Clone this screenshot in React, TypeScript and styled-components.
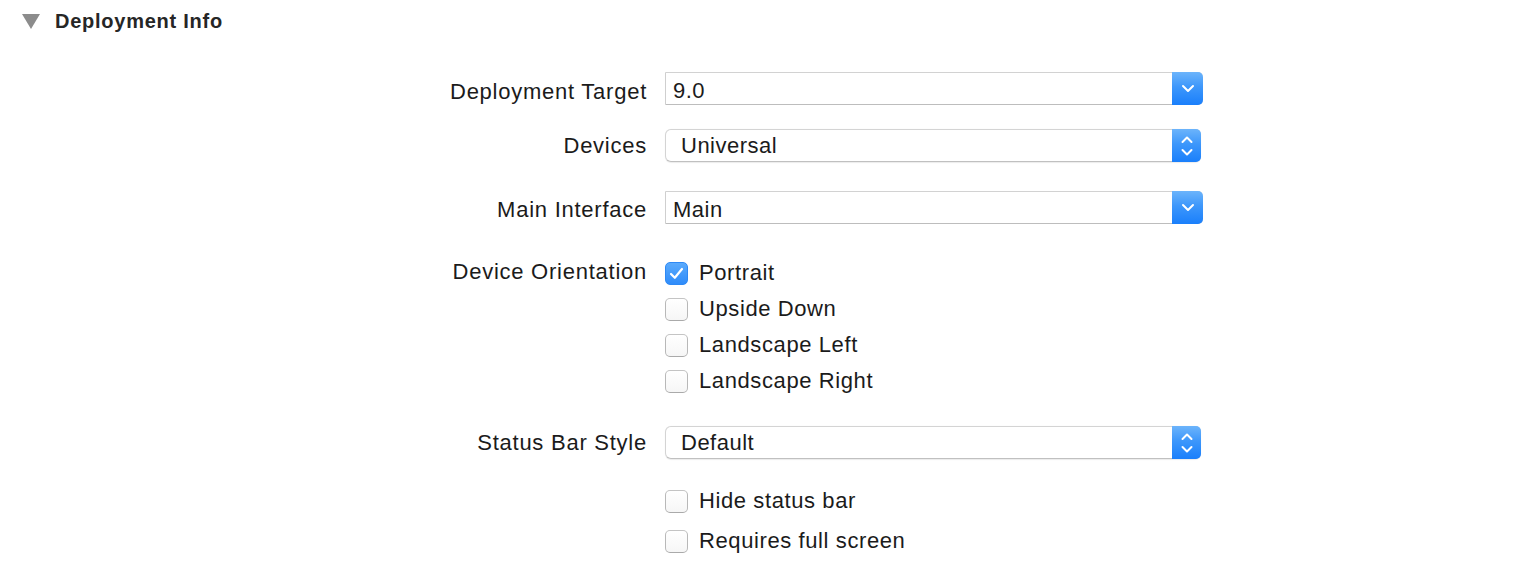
import React from 'react';
import styled, { createGlobalStyle, css } from 'styled-components';

const GlobalStyle = createGlobalStyle`
    html, body {
        margin: 0;
        padding: 0;
        background: #ffffff;
    }
    body {
        font-family: "Liberation Sans", Arial, sans-serif;
        color: #1d1d1d;
    }
`;

type SelectKind = 'combo' | 'popup';

interface RowProps {
    gap: number,
};

interface CheckOption {
    label: string,
    checked?: boolean,
};

const orientations: CheckOption[] = [
    { label: 'Portrait', checked: true },
    { label: 'Upside Down' },
    { label: 'Landscape Left' },
    { label: 'Landscape Right' },
];

const statusOptions: CheckOption[] = [
    { label: 'Hide status bar' },
    { label: 'Requires full screen' },
];

const ChevronDown = () => (
    <svg width="14" height="9" viewBox="0 0 14 9">
        <path d="M2 2 L7 7 L12 2" fill="none" stroke="#fff" strokeWidth="2" strokeLinecap="round" strokeLinejoin="round" />
    </svg>
);

const ChevronUpDown = () => (
    <svg width="14" height="24" viewBox="0 0 14 24">
        <path d="M2.5 8 L7 3.5 L11.5 8" fill="none" stroke="#fff" strokeWidth="2" strokeLinecap="round" strokeLinejoin="round" />
        <path d="M2.5 16 L7 20.5 L11.5 16" fill="none" stroke="#fff" strokeWidth="2" strokeLinecap="round" strokeLinejoin="round" />
    </svg>
);

const CheckMark = () => (
    <svg width="15" height="13" viewBox="0 0 15 13">
        <path d="M2 7 L5.8 10.8 L13 2" fill="none" stroke="#fff" strokeWidth="2.2" strokeLinecap="round" strokeLinejoin="round" />
    </svg>
);

const Select: React.FC<{ kind: SelectKind, value: string }> = ({ kind, value }) => (
    <SelectBox kind={kind}>
        <SelectValue kind={kind}>{value}</SelectValue>
        <SelectButton kind={kind}>
            {kind === 'combo' ? <ChevronDown /> : <ChevronUpDown />}
        </SelectButton>
    </SelectBox>
);

const CheckList: React.FC<{ options: CheckOption[], rowHeight: number }> = ({ options, rowHeight }) => (
    <Checks>
        {options.map((option) => (
            <CheckRow key={option.label} rowHeight={rowHeight}>
                <CheckBox checked={!!option.checked}>
                    {option.checked && <CheckMark />}
                </CheckBox>
                <CheckLabel>{option.label}</CheckLabel>
            </CheckRow>
        ))}
    </Checks>
);

export default function App() {
    return (
        <Page>
            <GlobalStyle />
            <SectionHeader>
                <Disclosure />
                <SectionTitle>{'Deployment Info'}</SectionTitle>
            </SectionHeader>
            <Form>
                <Row gap={30}>
                    <Label shift={3}>{'Deployment Target'}</Label>
                    <Select kind={'combo'} value={'9.0'} />
                </Row>
                <Row gap={24}>
                    <Label>{'Devices'}</Label>
                    <Select kind={'popup'} value={'Universal'} />
                </Row>
                <Row gap={29}>
                    <Label shift={2}>{'Main Interface'}</Label>
                    <Select kind={'combo'} value={'Main'} />
                </Row>
                <Row gap={31}>
                    <Label>{'Device Orientation'}</Label>
                    <CheckList options={orientations} rowHeight={36} />
                </Row>
                <Row gap={27}>
                    <Label>{'Status Bar Style'}</Label>
                    <Select kind={'popup'} value={'Default'} />
                </Row>
                <Row gap={22}>
                    <Label />
                    <CheckList options={statusOptions} rowHeight={40} />
                </Row>
            </Form>
        </Page>
    );
}

const Page = styled.div`
    width: 1530px;
    height: 570px;
    overflow: hidden;
    background: #ffffff;
`;
const SectionHeader = styled.div`
    height: 42px;
    display: flex;
    align-items: center;
    padding-left: 22px;
    gap: 15px;
`;
const Disclosure = styled.div`
    width: 0;
    height: 0;
    border-left: 9px solid transparent;
    border-right: 9px solid transparent;
    border-top: 15px solid #8c8c8c;
`;
const SectionTitle = styled.div`
    font-size: 20px;
    font-weight: 700;
    letter-spacing: 0.75px;
    color: #262626;
`;
const Form = styled.div`
    display: flex;
    flex-direction: column;
`;
const Row = styled.div<RowProps>`
    display: flex;
    align-items: flex-start;
    gap: 18px;
    margin-top: ${(p) => p.gap}px;
`;
const Label = styled.div<{ shift?: number }>`
    width: 647px;
    height: 33px;
    flex-shrink: 0;
    box-sizing: border-box;
    padding-top: ${(p) => p.shift || 0}px;
    text-align: right;
    font-size: 22px;
    letter-spacing: 0.75px;
    line-height: 33px;
    color: #1b1b1b;
`;
const SelectBox = styled.div<{ kind: SelectKind }>`
    display: flex;
    align-items: stretch;
    box-sizing: border-box;
    background: #ffffff;
    ${(p) => p.kind === 'combo' ? css`
        width: 538px;
        height: 33px;
        border-top: 1px solid #d2d2d2;
        border-left: 1px solid #cfcfcf;
        border-bottom: 1px solid #bdbdbd;
        border-radius: 0 5px 5px 0;
    ` : css`
        width: 536px;
        height: 33px;
        border: 1px solid #d4d4d4;
        border-bottom-color: #c0c0c0;
        border-radius: 6px;
        box-shadow: 0 0.5px 1px rgba(0, 0, 0, 0.08);
    `}
`;
const SelectValue = styled.div<{ kind: SelectKind }>`
    flex: 1;
    display: flex;
    align-items: center;
    padding-left: ${(p) => p.kind === 'combo' ? 7 : 15}px;
    padding-top: ${(p) => p.kind === 'combo' ? 5 : 0}px;
    font-size: 22px;
    letter-spacing: 0.5px;
    color: #1b1b1b;
`;
const SelectButton = styled.div<{ kind: SelectKind }>`
    width: ${(p) => p.kind === 'combo' ? 31 : 29}px;
    margin: -1px ${(p) => p.kind === 'combo' ? 0 : -1}px -1px 0;
    display: flex;
    align-items: center;
    justify-content: center;
    background: linear-gradient(to bottom, #6cb4fb 0%, #3d97fb 45%, #1a7ffb 100%);
    border-radius: 0 5px 5px 0;
`;
const Checks = styled.div`
    display: flex;
    flex-direction: column;
`;
const CheckRow = styled.div<{ rowHeight: number }>`
    height: ${(p) => p.rowHeight}px;
    display: flex;
    align-items: center;
    gap: 11px;
`;
const CheckBox = styled.div<{ checked: boolean }>`
    width: 23px;
    height: 23px;
    box-sizing: border-box;
    border-radius: 5px;
    display: flex;
    align-items: center;
    justify-content: center;
    ${(p) => p.checked ? css`
        background: linear-gradient(to bottom, #5aaafc, #2f8cfa);
        border: 1px solid #2e89f5;
    ` : css`
        background: linear-gradient(to bottom, #ffffff, #f6f6f6);
        border: 1px solid #b8b8b8;
        border-top-color: #c4c4c4;
        border-bottom-color: #aaaaaa;
    `}
`;
const CheckLabel = styled.div`
    font-size: 22px;
    letter-spacing: 0.6px;
    color: #1b1b1b;
`;
